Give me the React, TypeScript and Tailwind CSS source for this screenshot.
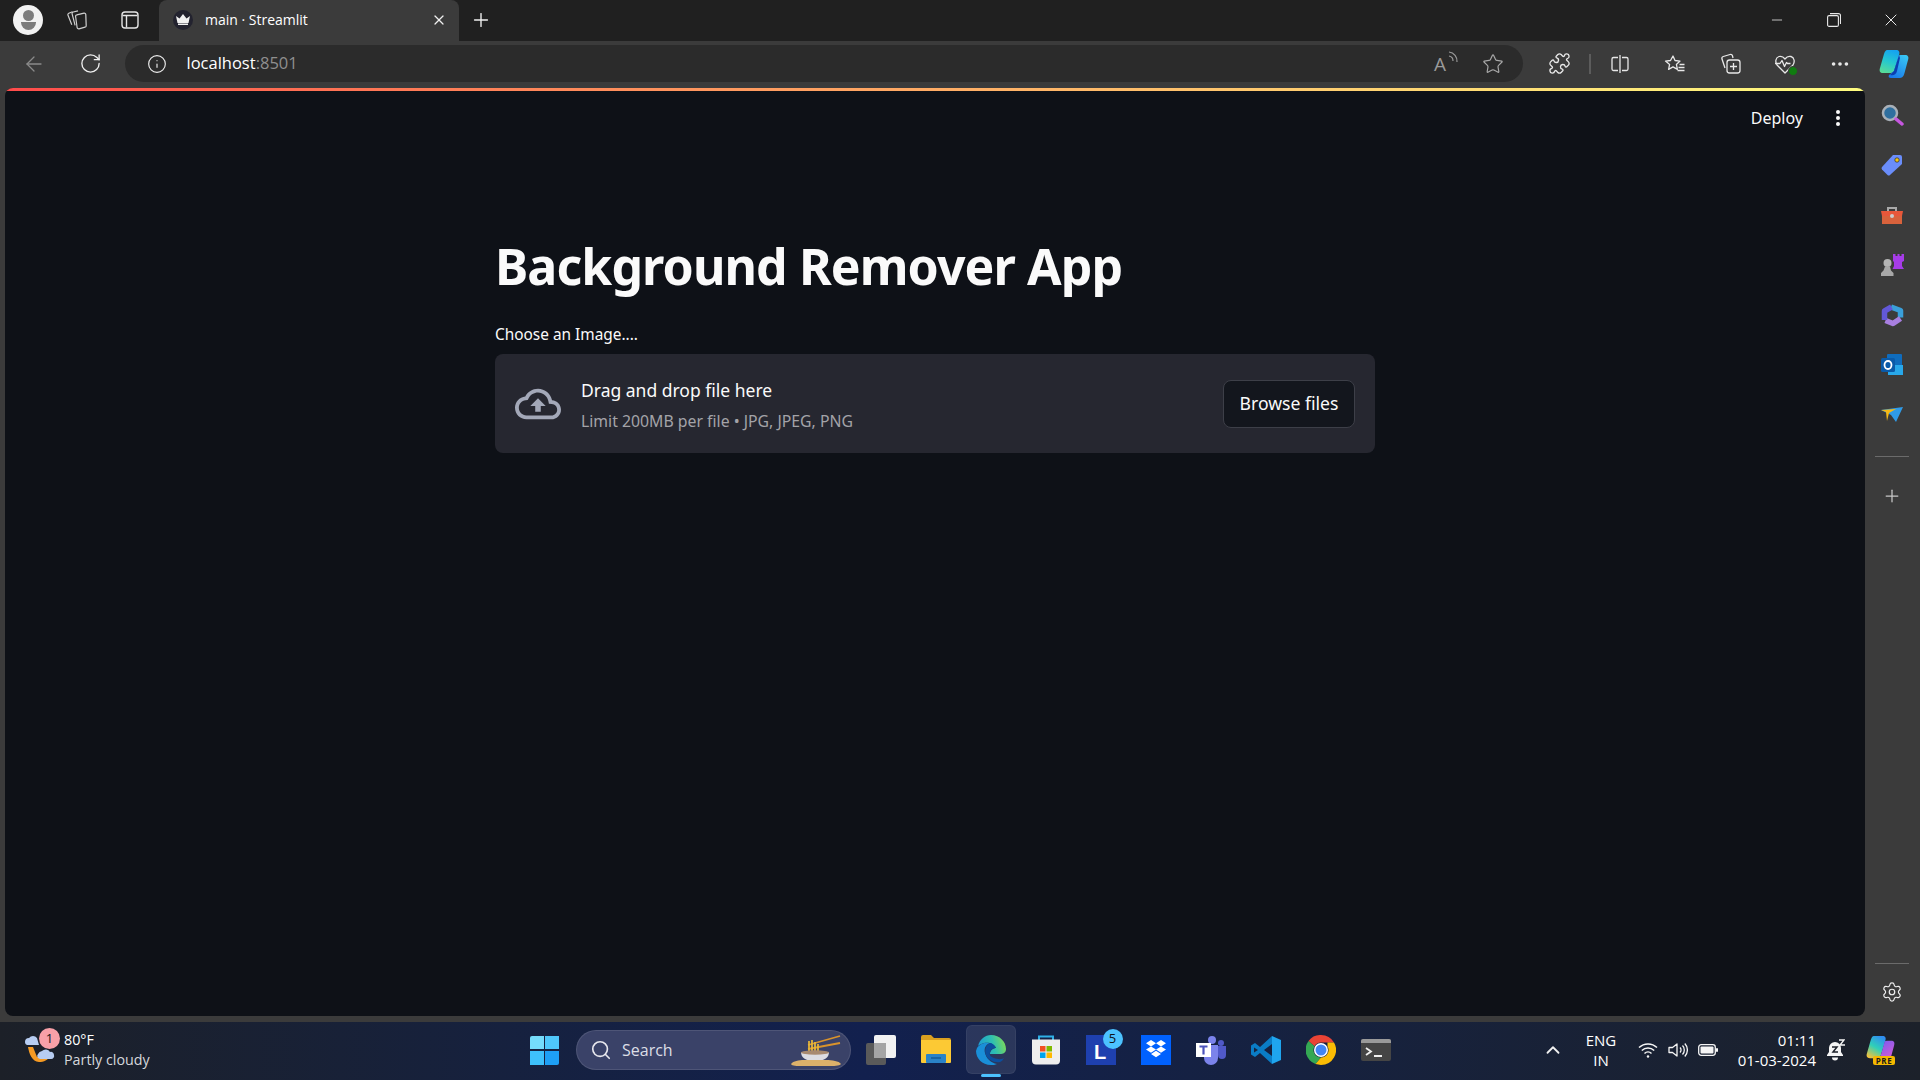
import { ArrowLeft, ChevronUp, Info, MoreHorizontal, Plus, Puzzle, RotateCw, Search, Settings, Star, X, Minus } from "lucide-react";
import type { ReactNode } from "react";

const uiFont = "font-['Open_Sans','Noto_Sans',sans-serif]";
const appFont = "font-['Noto_Sans',sans-serif]";

function Slot({ w, children }: { w: string; children: ReactNode }) {
    return <div className={`${w} h-full shrink-0 flex items-center justify-center`}>{children}</div>;
}

const bladeLeft = "M8 1H17C20 1 21 3 20 6L15 22C14 24 12 24 10 24H4C1 24 0 22 1 19L5 5C6 2 7 1 8 1Z";
const bladeRight = "M19 8C19 6 21 6 23 6H26C29 6 30 8 29 11L25.500 24C24.500 28 23 29 20 29H12C10 29 9 28 10 26L15 22Z";

function CopilotLogo() {
    return (
        <svg width="30" height="30" viewBox="0 0 30 30">
            <defs>
                <linearGradient id="cpa" x1="0.6" y1="0" x2="0.3" y2="1">
                    <stop offset="0" stopColor="#16a3f0" />
                    <stop offset=".5" stopColor="#25c8d0" />
                    <stop offset="1" stopColor="#58dc98" />
                </linearGradient>
                <linearGradient id="cpb" x1="0.8" y1="0" x2="0.2" y2="1">
                    <stop offset="0" stopColor="#38c6f4" />
                    <stop offset="1" stopColor="#1a78ea" />
                </linearGradient>
            </defs>
            <path d={bladeLeft} fill="url(#cpa)" />
            <path d={bladeRight} fill="url(#cpb)" />
            <path d="M20 6L15 22 11 26C14 27 17 26 18 22L21 9z" fill="#0c3fb0" />
        </svg>
    );
}

function TabActions() {
    return (
        <svg width="20" height="20" viewBox="0 0 20 20" fill="none" stroke="#e6e6e6" strokeWidth="1.4">
            <rect x="2" y="2" width="16" height="16" rx="3" />
            <path d="M2.5 5.5h15M6.5 5.5V17.5" />
        </svg>
    );
}

function Workspaces() {
    return (
        <svg width="22" height="22" viewBox="0 0 22 22" fill="none" stroke="#cfcfcf" strokeWidth="1.2">
            <path d="M6.500 2.800L2.800 4.300a1.500 1.500 0 0 0-.8 2l3.800 9.500" />
            <path d="M12 1.800L7.200 3a1.500 1.500 0 0 0-1.100 1.900l3 11.500" />
            <path d="M10.800 5.800l7.200-1.600a1.500 1.500 0 0 1 1.800 1.400l.4 11a1.500 1.500 0 0 1-1.200 1.600l-6 1.600a1.500 1.500 0 0 1-1.900-1.300l-1.500-11a1.500 1.500 0 0 1 1.200-1.700z" />
        </svg>
    );
}

function BrowserToolbarIcons() {
    return (
        <>
            <div className="w-[13px] h-full shrink-0" />
            <Slot w="w-[46px]">
                <Puzzle size={23} color="#e8e8e8" strokeWidth={1.400} />
            </Slot>
            <div className="w-[10.5px] h-full shrink-0 flex items-center justify-start pl-[7px]">
                <div className="w-[2px] h-[20px] bg-[#5c5c5c]" />
            </div>
            <Slot w="w-[55px]">
                <svg width="20" height="20" viewBox="0 0 20 20" fill="none" stroke="#e8e8e8" strokeWidth="1.3">
                    <path d="M8 3.500H3.500A1.500 1.500 0 0 0 2 5v10a1.500 1.500 0 0 0 1.500 1.500H8M12 3.500h4.500A1.500 1.500 0 0 1 18 5v10a1.500 1.500 0 0 1-1.500 1.500H12M10 1v18" />
                </svg>
            </Slot>
            <Slot w="w-[55px]">
                <svg width="22" height="22" viewBox="0 0 22 22" fill="none" stroke="#e8e8e8" strokeWidth="1.3" strokeLinejoin="round">
                    <path d="M9 3l2 4.500 5 .6-3.600 3.300 1 5-4.400-2.500-4.400 2.500 1-5L1.500 8.100l5-.6z" />
                    <path d="M15.500 11.500h5M14.500 14.500h6M13.500 17.500h7" />
                </svg>
            </Slot>
            <Slot w="w-[55px]">
                <svg width="22" height="22" viewBox="0 0 22 22" fill="none" stroke="#e8e8e8" strokeWidth="1.3" strokeLinejoin="round">
                    <path d="M6 15L3 6a2 2 0 0 1 1.300-2.500L11 1.500a2 2 0 0 1 2.500 1.300L14 5" />
                    <rect x="8" y="7" width="13" height="13" rx="2.500" />
                    <path d="M14.500 10v7M11 13.500h7" />
                </svg>
            </Slot>
            <Slot w="w-[55px]">
                <div className="relative">
                    <svg width="22" height="22" viewBox="0 0 22 22" fill="none" stroke="#e8e8e8" strokeWidth="1.3" strokeLinejoin="round">
                        <path d="M3 12C1 9 1.500 4.500 5 3.500c2.500-.7 4.500.5 6 2.500 1.500-2 3.500-3.200 6-2.500 3.500 1 4 5.500 2 8.500l-8 8z" />
                        <path d="M1 10.500h5l2-3 2.500 6 2-4 1 1h3" />
                    </svg>
                    <div className="absolute -right-[2px] -bottom-[1px] w-[10px] h-[10px] rounded-full bg-[#107c10] border border-[#3b3b3b]" />
                </div>
            </Slot>
            <Slot w="w-[55px]">
                <MoreHorizontal size={22} color="#e8e8e8" strokeWidth={2} />
            </Slot>
            <Slot w="w-[52px]">
                <CopilotLogo />
            </Slot>
        </>
    );
}

function UploadCloud() {
    return (
        <svg width="46" height="46" viewBox="0 0 24 24" fill="#a3a8b8">
            <path d="M19.35 10.04C18.67 6.59 15.64 4 12 4 9.11 4 6.6 5.64 5.35 8.04 2.34 8.36 0 10.91 0 14c0 3.31 2.69 6 6 6h13c2.76 0 5-2.24 5-5 0-2.64-2.05-4.78-4.65-4.96zM19 18H6c-2.21 0-4-1.79-4-4 0-2.05 1.53-3.76 3.56-3.97l1.07-.11.5-.95C8.08 7.14 9.94 6 12 6c2.62 0 4.88 1.86 5.39 4.43l.3 1.5 1.53.11c1.56.1 2.78 1.41 2.78 2.96 0 1.65-1.35 3-3 3zM8 13h2.55v3h2.9v-3H16l-4-4z" />
        </svg>
    );
}

function StreamlitPage() {
    return (
        <div className="flex-1 h-[928px] ml-[5px] bg-[#0e1117] rounded-lg overflow-hidden flex flex-col text-[#fafafa]">
            <div className="h-[3px] shrink-0 bg-gradient-to-r from-[#ff4b4b] to-[#fffd80]" />
            <div className="h-[53px] shrink-0 flex items-center justify-end">
                <span className={`${appFont} text-[16px] mr-[33px]`}>Deploy</span>
                <svg className="mr-[25px]" width="4" height="18" viewBox="0 0 4 18" fill="#fafafa">
                    <circle cx="2" cy="3" r="2" />
                    <circle cx="2" cy="9" r="2" />
                    <circle cx="2" cy="15" r="2" />
                </svg>
            </div>
            <div className="flex justify-center">
                <div className={`w-[880px] ${appFont}`}>
                    <h1 className="mt-[92px] h-[60px] text-[50px] leading-[60px] font-bold tracking-[-0.9px]">Background Remover App</h1>
                    <div className="mt-[28px] text-[15.4px] leading-[22px]">Choose an Image....</div>
                    <div className="mt-[8px] h-[99px] rounded-lg bg-[#262730] flex items-center pl-[20px] pr-[20px]">
                        <UploadCloud />
                        <div className="ml-[20px] flex-1">
                            <div className="text-[17.5px] leading-[24px]">Drag and drop file here</div>
                            <div className="mt-[8px] text-[15.800px] leading-[20px] text-[#a3a3a8] translate-y-[1px]">Limit 200MB per file • JPG, JPEG, PNG</div>
                        </div>
                        <button className="w-[132px] h-[48px] rounded-lg bg-[#13161d] border border-[#3d3f48] text-[17.6px]">Browse files</button>
                    </div>
                </div>
            </div>
        </div>
    );
}

function SidebarIcons() {
    return (
        <>
            <Slot w="w-full !h-[50px]">
                <svg width="24" height="24" viewBox="0 0 24 24">
                    <circle cx="10" cy="10" r="7" fill="#2f6f9f" stroke="#a9b0b8" strokeWidth="2.500" />
                    <path d="M16 16l6 5" stroke="#c657e0" strokeWidth="3.500" strokeLinecap="round" />
                </svg>
            </Slot>
            <Slot w="w-full !h-[50px]">
                <svg width="24" height="24" viewBox="0 0 24 24">
                    <path d="M13 2h7a2 2 0 0 1 2 2v7L10 22a2 2 0 0 1-2.500 0L2 16.500A2 2 0 0 1 2 14z" fill="#6a8dfa" />
                    <circle cx="17" cy="7" r="2.200" fill="#f2c511" stroke="#333" strokeWidth=".8" />
                </svg>
            </Slot>
            <Slot w="w-full !h-[50px]">
                <svg width="24" height="24" viewBox="0 -1 24 24">
                    <path d="M8 7V4h8v3" fill="none" stroke="#a9a9a9" strokeWidth="2" />
                    <path d="M1 7h22l-1 5H2z" fill="#e8573a" />
                    <path d="M2 12h20v8H2z" fill="#d8623c" />
                    <circle cx="12" cy="12" r="2" fill="#ccc" />
                </svg>
            </Slot>
            <Slot w="w-full !h-[50px]">
                <svg width="24" height="24" viewBox="0 0 24 24">
                    <path d="M13 1h2.500v2h2V1h2v2h2V1H24v7l-2 1v4l2 3H12.500l1.500-3V9l-1-1z" fill="#a63ce8" />
                    <circle cx="7.500" cy="10" r="4" fill="#b4b4b4" />
                    <path d="M5 13.500h5l1 4 2.500 2.500v3H1v-3L3.500 17.500z" fill="#a8a8a8" />
                </svg>
            </Slot>
            <Slot w="w-full !h-[50px]">
                <svg width="24" height="24" viewBox="0 0 24 24" fill="none" strokeWidth="5.500" strokeLinejoin="round">
                    <path d="M11 4l9.500 3.500v7" stroke="#3a9fd9" />
                    <path d="M20.500 15.500L13 20.500l-7.500-3" stroke="#a87fe0" />
                    <path d="M4.500 17V8l7-4" stroke="#6258d8" />
                </svg>
            </Slot>
            <Slot w="w-full !h-[50px]">
                <svg width="24" height="24" viewBox="0 0 24 24">
                    <rect x="7" y="1" width="15" height="15" rx="1" fill="#0f6cbd" />
                    <path d="M8 12h15v10H8z" fill="#28a8ea" />
                    <rect x="1" y="5" width="14" height="14" rx="1.500" fill="#0a5aa8" />
                    <ellipse cx="8" cy="12" rx="3.500" ry="4" fill="none" stroke="#fff" strokeWidth="1.800" />
                </svg>
            </Slot>
            <Slot w="w-full !h-[50px]">
                <svg width="24" height="24" viewBox="0 0 24 24">
                    <path d="M1 7l22-3-7 15-5-7z" fill="#2f9be8" />
                    <path d="M1 7l15-1L9 10l-2 8-1-9z" fill="#f5b915" />
                </svg>
            </Slot>
        </>
    );
}

function WindowsLogo() {
    return (
        <div className="grid grid-cols-2 gap-[1.5px] w-[29px] h-[29px]">
            <div className="bg-[#75dcfb] rounded-tl-[2px]" />
            <div className="bg-[#4fc7fa]" />
            <div className="bg-[#3ec0fb]" />
            <div className="bg-[#1e9ff5] rounded-br-[2px]" />
        </div>
    );
}

function Noodles() {
    return (
        <svg width="52" height="32" viewBox="0 0 52 32">
            <path d="M18 11L50 2M18 15L50 9" stroke="#d9932b" strokeWidth="1.800" />
            <path d="M19 7v14M22 6v15M25 8v13M28 10v11" stroke="#e9b93a" strokeWidth="1.700" />
            <path d="M11 18h28c0 6-5 9-14 9s-14-3-14-9z" fill="#dcdce2" />
            <ellipse cx="25" cy="18.500" rx="14" ry="2.200" fill="#a88a70" />
            <path d="M1 30c2-3 8-4 13-4h22c6 0 13 1 15 4-2 2-7 2-13 2H12c-5 0-10 0-11-2z" fill="#dcb16a" />
        </svg>
    );
}

function TaskIcons() {
    return (
        <>
            <Slot w="w-[55px]">
                <svg width="30" height="30" viewBox="0 0 30 30">
                    <path d="M0 2a2 2 0 0 1 2-2h8l3 3h15a2 2 0 0 1 2 2v5H0z" fill="#d9a020" />
                    <path d="M0 5h30v22a1 1 0 0 1-1 1H1a1 1 0 0 1-1-1z" fill="#fcc934" />
                    <rect x="5" y="19" width="20" height="9" rx="1" fill="#2a83c9" />
                    <path d="M10 23h10" stroke="#155b9a" strokeWidth="1.500" />
                </svg>
            </Slot>
            <div className="relative w-[55px] h-full shrink-0 flex items-center justify-center">
                <div className="absolute left-[2.500px] top-[3px] w-[50px] h-[49px] rounded-md bg-white/10 border border-white/5" />
                <svg className="relative" width="30" height="30" viewBox="0 0 30 30">
                    <defs>
                        <linearGradient id="edgeA" x1="0" y1="0.6" x2="1" y2="0.4">
                            <stop offset="0" stopColor="#1c9ad6" />
                            <stop offset=".55" stopColor="#2fc0b0" />
                            <stop offset="1" stopColor="#7ed957" />
                        </linearGradient>
                    </defs>
                    <path d="M2 11C4 4 9 0 15 0C24 0 30 7 30 14C30 18 27 19 24 19H14C14 15 18 13 20 13C18 8 12 7 8 8C5 9 3 10 2 11Z" fill="url(#edgeA)" />
                    <path d="M1 13C4 8 10 7 14 8C9 10 8 14 9 18C10 23 15 28 21 29C19 30 17 30 15 30C6 30 0 23 0 16Z" fill="#1a8fd8" />
                    <path d="M14 8C10 10 8 15 10 20C12 25 18 28 24 27C26 26 27 25 28 23C25 25 21 24 18 23C15 22 13 20 14 18C14 14 18 13 20 13C19 10 16 8 14 8Z" fill="#0c4f9e" />
                </svg>
                <div className="absolute left-[17.500px] bottom-[1px] w-[20px] h-[3px] rounded-full bg-[#4cc2ff]" />
            </div>
            <Slot w="w-[55px]">
                <svg width="30" height="30" viewBox="0 0 30 30">
                    <path d="M8 6V1.500h14V6" fill="none" stroke="#2fb0e8" strokeWidth="2" />
                    <path d="M1 4.500h28v21a4 4 0 0 1-4 4H5a4 4 0 0 1-4-4z" fill="#eeeeee" />
                    <path d="M9 11h5.500v5.500H9z" fill="#f25022" />
                    <path d="M15.500 11H21v5.500h-5.500z" fill="#7fba00" />
                    <path d="M9 17.500h5.500V23H9z" fill="#00a4ef" />
                    <path d="M15.500 17.500H21V23h-5.500z" fill="#ffb900" />
                </svg>
            </Slot>
            <div className="relative w-[55px] h-full shrink-0 flex items-center justify-center">
                <div className="w-[30px] h-[30px] bg-[#1e40af] flex items-center justify-center">
                    <span className="text-white font-['Liberation_Sans',sans-serif] font-bold text-[20px] mt-[3px] -ml-[2px]">L</span>
                </div>
                <div className={`absolute left-[29px] top-[7px] w-[20px] h-[20px] rounded-full bg-[#4cc2ff] text-[#10131a] text-[13px] flex items-center justify-center ${uiFont}`}>5</div>
            </div>
            <Slot w="w-[55px]">
                <div className="w-[30px] h-[30px] bg-[#0061fe] flex items-center justify-center">
                    <svg width="22" height="20" viewBox="0 0 22 20" fill="#fff">
                        <path d="M6 0l5 3.200-5 3.200L1 3.200zM16 0l5 3.200-5 3.200-5-3.200zM1 9.600l5-3.200 5 3.200-5 3.200zM16 6.400l5 3.200-5 3.200-5-3.200zM6 14l5-3.200 5 3.200-5 3.200z" />
                    </svg>
                </div>
            </Slot>
            <Slot w="w-[55px]">
                <svg width="30" height="30" viewBox="0 0 30 30">
                    <circle cx="16" cy="5" r="4" fill="#7b83eb" />
                    <circle cx="25" cy="8" r="3" fill="#5059c9" />
                    <path d="M20 11h10v9a4 4 0 0 1-8 0z" fill="#5059c9" />
                    <path d="M8 10h14v13a7 7 0 0 1-14 0z" fill="#7b83eb" />
                    <rect x="0" y="8" width="15" height="14" fill="#fff" />
                    <path d="M3.500 11.500h8M7.500 11.500v8" stroke="#4b53bc" strokeWidth="2.200" />
                </svg>
            </Slot>
            <Slot w="w-[55px]">
                <svg width="30" height="30" viewBox="0 0 30 30">
                    <path d="M21 1L9 12 4 8l-4 2.500v9L4 22l5-4 12 11v-8l-8-6 8-6z" fill="#0a7cc5" />
                    <path d="M21 1l9 4v20l-9 4z" fill="#1fa5ee" />
                    <path d="M3 12.500L7 15l-4 2.500z" fill="#16243f" />
                </svg>
            </Slot>
            <Slot w="w-[55px]">
                <svg width="30" height="30" viewBox="0 0 30 30">
                    <path d="M15 0a15 15 0 0 1 13 7.500H15a7.500 7.500 0 0 0-6.500 3.750L2.500 6A15 15 0 0 1 15 0z" fill="#ea4335" />
                    <path d="M2.500 6l6 5.250A7.500 7.500 0 0 0 15 22.500L9.500 29A15 15 0 0 1 2.500 6z" fill="#34a853" />
                    <path d="M28 7.500A15 15 0 0 1 15 30l-5.500-1 5.500-6.500a7.500 7.500 0 0 0 6.500-11.250L21.500 7.500z" fill="#fbbc04" />
                    <circle cx="15" cy="15" r="7" fill="#fff" />
                    <circle cx="15" cy="15" r="5.500" fill="#4285f4" />
                </svg>
            </Slot>
            <Slot w="w-[55px]">
                <svg width="30" height="24" viewBox="0 0 30 24">
                    <rect width="30" height="22" y="1" rx="2" fill="#454545" />
                    <path d="M2 1h26a2 2 0 0 1 2 2v2H0V3a2 2 0 0 1 2-2z" fill="#9a9a9a" />
                    <path d="M5 10l5 3.500L5 17" fill="none" stroke="#f0f0f0" strokeWidth="1.800" />
                    <path d="M13 18h8" stroke="#f0f0f0" strokeWidth="2" />
                </svg>
            </Slot>
        </>
    );
}

function Taskbar() {
    return (
        <div className={`h-[58px] shrink-0 relative flex items-center pb-[2px] text-white bg-gradient-to-r from-[#1c2028] via-[#12204e] via-45% to-[#1c212a] ${uiFont}`}>
            <div className="w-[530px] h-full shrink-0 flex items-center pl-[24px]">
                <div className="relative w-[34px] h-[34px] shrink-0">
                    <svg width="34" height="34" viewBox="0 0 34 34">
                        <path d="M1 9a4 4 0 0 1 4-4 5 5 0 0 1 8 0l2 7H3a3 3 0 0 1-2-3z" fill="#b7cdf2" />
                        <path d="M4 14c1 6 4 15 11 15 5 0 9-2 11-6l-13 1-4-10z" fill="#f59a23" />
                        <path d="M14 21a5 5 0 0 1 4-3 5 5 0 0 1 8 1 3 3 0 0 1 4 3 3 3 0 0 1-3 4H16a3 3 0 0 1-2-5z" fill="#b7cdf2" />
                    </svg>
                    <div className="absolute left-[15px] -top-[5px] w-[21px] h-[21px] rounded-full bg-[#f8a0a8] text-[#14161c] text-[13px] flex items-center justify-center">1</div>
                </div>
                <div className="ml-[6px] text-[14.3px] leading-[20px]">
                    <div>80°F</div>
                    <div className="text-[#d5d7dc]">Partly cloudy</div>
                </div>
            </div>
            <WindowsLogo />
            <div className="ml-[17px] w-[275px] h-[40px] shrink-0 rounded-full bg-[#3a4268] border border-white/10 flex items-center pl-[13px] pr-[8px]">
                <Search size={22} color="#e8e8ee" strokeWidth={1.800} />
                <span className="ml-[10px] flex-1 text-[16px] text-[#dcdee6]">Search</span>
                <Noodles />
            </div>
            <Slot w="w-[57.500px]">
                <div className="relative w-[30px] h-[30px] ml-[2px]">
                    <div className="absolute left-0 top-[8px] w-[20px] h-[22px] rounded-[2px] bg-[#5a5a5a]" />
                    <div className="absolute left-[8px] top-0 w-[22px] h-[23px] rounded-[2px] bg-[#f2f2f2]" />
                    <div className="absolute left-[8px] top-[8px] w-[12px] h-[15px] bg-[#a5a5a5]" />
                </div>
            </Slot>
            <TaskIcons />
            <div className="flex-1 h-full" />
            <Slot w="w-[40px]">
                <ChevronUp size={22} color="#f0f0f0" strokeWidth={2} />
            </Slot>
            <div className="w-[56px] h-full shrink-0 flex flex-col items-center justify-center text-[15px] leading-[20px]">
                <div>ENG</div>
                <div>IN</div>
            </div>
            <Slot w="w-[38px]">
                <svg width="20" height="18" viewBox="0 0 20 18" fill="none" stroke="#f5f5f5" strokeWidth="1.500">
                    <path d="M1 6.500a13 13 0 0 1 18 0M3.800 9.500a9 9 0 0 1 12.400 0M6.500 12.500a5 5 0 0 1 7 0" />
                    <circle cx="10" cy="15.500" r="1.200" fill="#f5f5f5" stroke="none" />
                </svg>
            </Slot>
            <Slot w="w-[22px]">
                <svg width="20" height="18" viewBox="0 0 20 18" fill="none" stroke="#f5f5f5" strokeWidth="1.300" strokeLinejoin="round">
                    <path d="M1 6.500h3.500L9 3v12l-4.500-3.500H1z" />
                    <path d="M12 6.500a3.500 3.500 0 0 1 0 5M14.500 4.500a6.500 6.500 0 0 1 0 9M16.800 2.500a9.500 9.500 0 0 1 0 13" />
                </svg>
            </Slot>
            <Slot w="w-[38px]">
                <svg width="20" height="14" viewBox="0 0 20 14">
                    <rect x=".7" y="1.700" width="16.600" height="10.600" rx="2.500" fill="none" stroke="#f5f5f5" strokeWidth="1.300" />
                    <rect x="2.500" y="3.500" width="13" height="7" rx="1" fill="#f5f5f5" />
                    <rect x="18" y="5" width="2" height="4" rx="1" fill="#f5f5f5" />
                </svg>
            </Slot>
            <div className="w-[89px] h-full shrink-0 flex flex-col justify-center items-end text-[15px] leading-[20px]">
                <div>01:11</div>
                <div>01-03-2024</div>
            </div>
            <Slot w="w-[38px]">
                <svg width="20" height="22" viewBox="0 0 20 22" fill="#f5f5f5">
                    <path d="M10 3a6 6 0 0 0-6 6v4l-2 3v1h16v-1l-2-3V9a6 6 0 0 0-6-6z" />
                    <path d="M7 18.500h6a3 3 0 0 1-6 0z" />
                    <path d="M7 8h5l-4 5h5" fill="none" stroke="#1c212a" strokeWidth="1.500" />
                    <path d="M14 1h5l-4 5h5" fill="none" stroke="#f5f5f5" strokeWidth="1.400" />
                </svg>
            </Slot>
            <div className="relative w-[52px] h-full shrink-0 flex items-center justify-center">
                <svg width="29" height="29" viewBox="0 0 30 30" className="-mt-[2px]">
                    <defs>
                        <linearGradient id="prea" x1="0.7" y1="0" x2="0.2" y2="1">
                            <stop offset="0" stopColor="#2f8df0" />
                            <stop offset=".5" stopColor="#2fd0b8" />
                            <stop offset="1" stopColor="#f6c23a" />
                        </linearGradient>
                        <linearGradient id="preb" x1="0.3" y1="0" x2="0.9" y2="1">
                            <stop offset="0" stopColor="#7a5cf0" />
                            <stop offset="1" stopColor="#e85ad0" />
                        </linearGradient>
                    </defs>
                    <path d={bladeLeft} fill="url(#prea)" />
                    <path d={bladeRight} fill="url(#preb)" />
                </svg>
                <div className="absolute left-[19px] bottom-[13px] w-[22px] h-[9px] rounded-[2px] bg-[#f5b800] text-[#1b1b1b] text-[8px] leading-[9px] font-bold tracking-[0.5px] text-center">PRE</div>
            </div>
            <div className="w-[14px] shrink-0" />
        </div>
    );
}

export default function App() {
    return (
        <div className={`w-[1920px] h-[1080px] overflow-hidden flex flex-col bg-[#3b3b3b] ${uiFont}`}>
            <div className="h-[41px] shrink-0 bg-[#202020] flex items-center pb-[2px] text-white">
                <div className="w-[5px] shrink-0" />
                <Slot w="w-[46px]">
                    <div className="w-[30px] h-[30px] rounded-full bg-[#f2f2f2] flex flex-col items-center justify-center">
                        <div className="w-[11px] h-[11px] rounded-full bg-[#7c7c7c]" />
                        <div className="mt-[1px] w-[15px] h-[8px] rounded-b-full bg-[#7c7c7c]" />
                    </div>
                </Slot>
                <Slot w="w-[52px]"><Workspaces /></Slot>
                <Slot w="w-[54px]"><TabActions /></Slot>
                <div className="ml-[2px] w-[300px] h-[41px] self-start shrink-0 rounded-t-lg bg-[#3b3b3b] flex items-center pl-[14px] pr-[12px] pb-[2px]">
                    <div className="w-[20px] h-[20px] rounded-full bg-[#23232f] flex items-center justify-center">
                        <svg width="14" height="11" viewBox="0 0 14 11" fill="#f2f2f2">
                            <path d="M0 2l3.500 2.500L7 0l3.500 4.500L14 2l-1.500 7h-11zM2 9.500h10V11H2z" />
                        </svg>
                    </div>
                    <span className="ml-[12px] flex-1 text-[14px]">main · Streamlit</span>
                    <X size={16} color="#f0f0f0" strokeWidth={1.800} />
                </div>
                <Slot w="w-[44px]"><Plus size={22} color="#f0f0f0" strokeWidth={1.500} /></Slot>
                <div className="flex-1" />
                <Slot w="w-[57px]"><Minus size={16} color="#e8e8e8" strokeWidth={1.200} /></Slot>
                <Slot w="w-[57px]">
                    <svg width="14" height="14" viewBox="0 0 14 14" fill="none" stroke="#e8e8e8" strokeWidth="1.100">
                        <rect x=".6" y="2.600" width="10.800" height="10.800" rx="1.500" />
                        <path d="M3 .6h8.500a2 2 0 0 1 2 2V11" />
                    </svg>
                </Slot>
                <Slot w="w-[57px]"><X size={20} color="#e8e8e8" strokeWidth={1.200} /></Slot>
                <div className="w-[1px] shrink-0" />
            </div>
            <div className="h-[47px] shrink-0 flex items-center pb-[2px]">
                <div className="w-[6px] shrink-0" />
                <Slot w="w-[56px]"><ArrowLeft size={24} color="#8a8a8a" strokeWidth={1.300} /></Slot>
                <Slot w="w-[56px]"><RotateCw size={23} color="#f0f0f0" strokeWidth={1.400} /></Slot>
                <div className="ml-[7px] w-[1398px] h-[37px] shrink-0 rounded-full bg-[#2b2b2b] flex items-center pl-[22px] pr-[19px]">
                    <Info size={20} color="#ececec" strokeWidth={1.400} />
                    <span className="ml-[19.5px] flex-1 text-[16.5px]">
                        <span className="text-white">localhost</span>
                        <span className="text-[#8f8f8f]">:8501</span>
                    </span>
                    <div className="relative w-[24px] h-[24px] mr-[24px]">
                        <span className="text-[#9a9a9a] text-[19px] leading-[24px]">A</span>
                        <svg className="absolute -right-[1px] -top-[1px]" width="12" height="13" viewBox="0 0 12 13" fill="none" stroke="#9a9a9a" strokeWidth="1.200">
                            <path d="M2 1a9 9 0 0 1 8 10M2 5a5 5 0 0 1 4 5" />
                        </svg>
                    </div>
                    <Star size={22} color="#a8a8a8" strokeWidth={1.300} />
                </div>
                <BrowserToolbarIcons />
            </div>
            <div className="h-[934px] shrink-0 flex">
                <StreamlitPage />
                <div className="w-[55px] h-full shrink-0 flex flex-col pt-[2px] pb-[10px] pr-[1px]">
                    <SidebarIcons />
                    <div className="mt-[16px] mx-[10px] h-px bg-[#6b6b6b]" />
                    <Slot w="w-full !h-[40px] mt-[19px]"><Plus size={20} color="#c8c8c8" strokeWidth={1.500} /></Slot>
                    <div className="mt-auto mb-[8px] mx-[10px] h-px bg-[#6b6b6b]" />
                    <Slot w="w-full !h-[40px]"><Settings size={22} color="#efefef" strokeWidth={1.300} /></Slot>
                </div>
            </div>
            <Taskbar />
        </div>
    );
}
